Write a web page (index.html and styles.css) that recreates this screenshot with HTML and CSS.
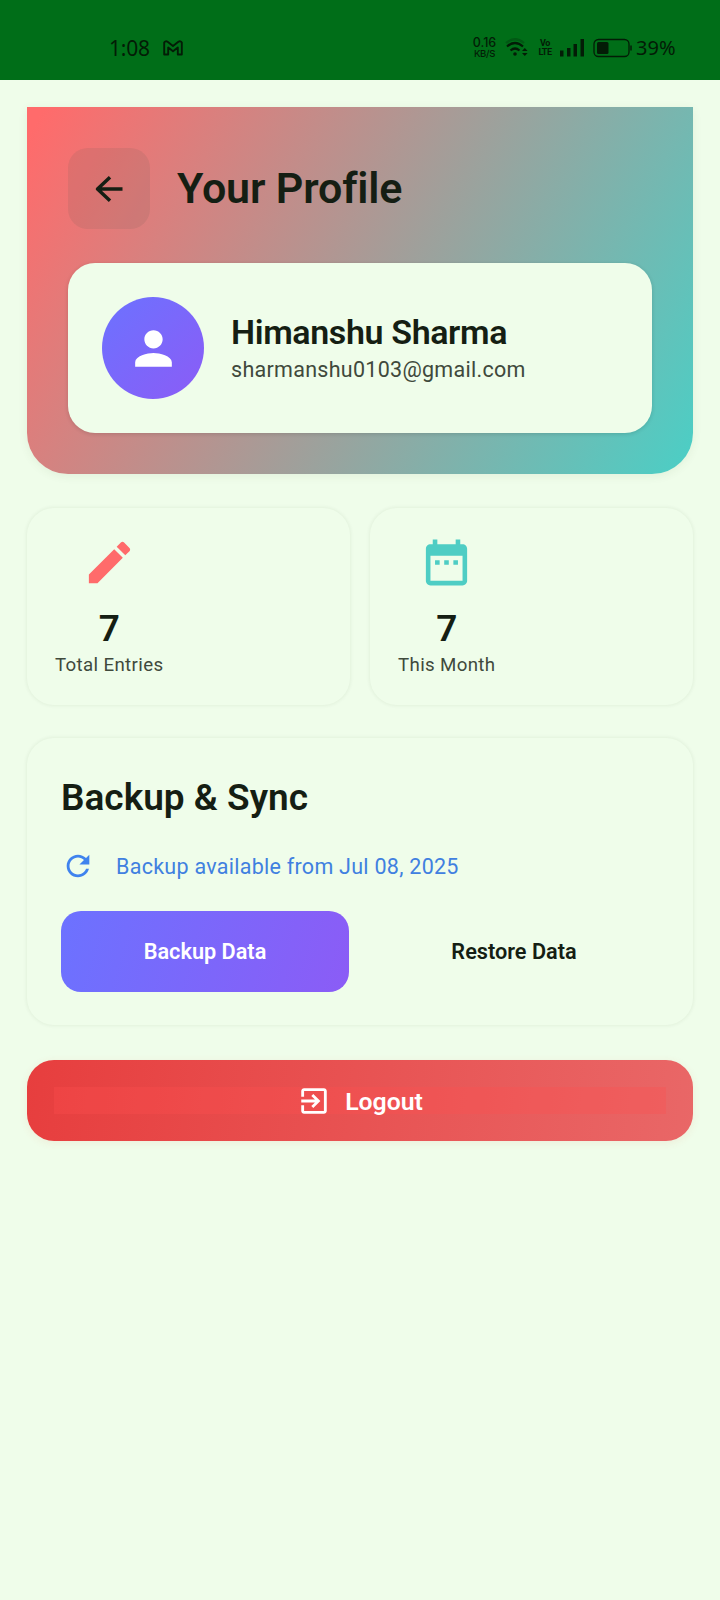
FILE: index.html
```html
<!DOCTYPE html>
<html lang="en">
<head>
<meta charset="utf-8">
<title>Your Profile</title>
<link rel="stylesheet" href="styles.css">
</head>
<body>
<div class="status">
  <div class="status-left">
    <span class="clock">1:08</span>
    <svg class="mail" width="20" height="16" viewBox="0 0 20 16" fill="none" stroke="#031c06" stroke-width="1.9" stroke-linejoin="round"><path d="M1.2 14.500V2.600Q2.500.4 4.600 1.800L10 6l5.400-4.200Q17.500.4 18.800 2.600V14.500H14.800V7.500L10 11.200 5.200 7.500v7z"/></svg>
  </div>
  <div class="status-right">
    <div class="rate"><span>0.16</span><small>KB/S</small></div>
    <svg class="wifi" width="24" height="20" viewBox="0 0 24 20" fill="none" stroke="#031c06" stroke-width="2.200"><path d="M1 5Q10-2.500 19 5" opacity=".25"/><path d="M2 8.500Q10 1.500 18 8.500M5.500 12.500q4.500-4 9 0"/><circle cx="10" cy="16" r="1.800" fill="#031c06" stroke="none"/><path d="M17 13l2.800-3 2.800 3zM17 15l2.800 3 2.800-3z" fill="#031c06" stroke="none"/></svg>
    <div class="volte"><span>Vo</span><span>LTE</span></div>
    <svg class="signal" width="25" height="18" viewBox="0 0 25 18" fill="#031c06"><rect x="0" y="11.500" width="3.500" height="6"/><rect x="7" y="9" width="3.500" height="8.500"/><rect x="13.500" y="5" width="3.500" height="12.500"/><rect x="20.500" y="0" width="3.500" height="17.500"/></svg>
    <svg class="battery" width="40" height="20" viewBox="0 0 40 20"><rect x="1" y="1.500" width="35" height="17" rx="4.500" fill="none" stroke="#031c06" stroke-width="1.300"/><rect x="4" y="4" width="11.500" height="12" rx="1.500" fill="#031c06"/><path d="M38 7.500v5" stroke="#031c06" stroke-width="1.500"/></svg>
    <span class="percent">39%</span>
  </div>
</div>
<main class="page">
  <section class="hero">
    <div class="hero-top">
      <div class="back"><svg width="32" height="28" viewBox="0 0 32 28" fill="none" stroke="#151e13" stroke-width="3.500" stroke-linejoin="round"><path d="M29.500 14H4M17 2.200L4.500 14 17 25.800"/></svg></div>
      <h1 class="title">Your Profile</h1>
    </div>
    <div class="user">
      <div class="avatar"><svg width="55" height="55" viewBox="0 0 24 24" fill="#fff"><path d="M12 12c2.210 0 4-1.790 4-4s-1.790-4-4-4-4 1.790-4 4 1.790 4 4 4zm0 2c-2.670 0-8 1.340-8 4v2h16v-2c0-2.660-5.330-4-8-4z"/></svg></div>
      <div class="user-text">
        <div class="name">Himanshu Sharma</div>
        <div class="email">sharmanshu0103@gmail.com</div>
      </div>
    </div>
  </section>
  <section class="stats">
    <div class="card stat">
      <div class="stat-body">
        <svg width="55" height="55" viewBox="0 0 24 24" fill="#ff6b6b"><path d="M3 17.250V21h3.750L17.810 9.940l-3.750-3.750L3 17.250zM20.710 7.040c.39-.39.39-1.020 0-1.410l-2.340-2.340c-.39-.39-1.020-.39-1.410 0l-1.830 1.830 3.750 3.750 1.830-1.830z"/></svg>
        <div class="count">7</div>
        <div class="label">Total Entries</div>
      </div>
    </div>
    <div class="card stat">
      <div class="stat-body">
        <svg width="55" height="55" viewBox="0 0 24 24" fill="#4ecdc4"><path d="M9 11H7v2h2v-2zm4 0h-2v2h2v-2zm4 0h-2v2h2v-2zm2-7h-1V2h-2v2H8V2H6v2H5c-1.110 0-1.990.9-1.990 2L3 20c0 1.100.89 2 2 2h14c1.100 0 2-.9 2-2V6c0-1.100-.9-2-2-2zm0 16H5V9h14v11z"/></svg>
        <div class="count">7</div>
        <div class="label">This Month</div>
      </div>
    </div>
  </section>
  <section class="card backup">
    <h2 class="heading">Backup &amp; Sync</h2>
    <div class="sync">
      <svg width="34" height="34" viewBox="0 0 24 24" fill="#3f83ee"><path d="M17.650 6.350C16.200 4.900 14.210 4 12 4c-4.420 0-7.990 3.580-7.990 8s3.570 8 7.990 8c3.730 0 6.840-2.550 7.730-6h-2.080c-.82 2.330-3.040 4-5.650 4-3.310 0-6-2.690-6-6s2.690-6 6-6c1.660 0 3.140.69 4.220 1.780L13 11h7V4l-2.350 2.350z"/></svg>
      <span class="sync-text">Backup available from Jul 08, 2025</span>
    </div>
    <div class="actions">
      <div class="button primary">Backup Data</div>
      <div class="button">Restore Data</div>
    </div>
  </section>
  <section class="logout">
    <div class="logout-inner">
      <svg width="34" height="34" viewBox="0 0 24 24" fill="#fff"><path d="M10.090 15.590L11.500 17l5-5-5-5-1.410 1.410L12.670 11H3v2h9.670l-2.580 2.590zM19 3H5c-1.110 0-2 .9-2 2v4h2V5h14v14H5v-4H3v4c0 1.100.89 2 2 2h14c1.100 0 2-.9 2-2V5c0-1.100-.9-2-2-2z"/></svg>
      <span class="logout-text">Logout</span>
    </div>
  </section>
</main>
</body>
</html>
```
FILE: styles.css
```css
* { box-sizing: border-box; }
body {
  margin: 0;
  min-height: 1600px;
  background: #effdea;
  color: #151e13;
  font-family: Roboto, sans-serif;
}
svg { display: block; flex: none; }
.status {
  height: 80px;
  padding: 18px 45px 2px 109px;
  background: #006e18;
  color: #031c06;
  display: flex;
  align-items: center;
  justify-content: space-between;
}
.status-left, .status-right { display: flex; align-items: center; }
.clock { font: 21px/24px "Noto Sans", sans-serif; width: 41px; letter-spacing: -0.2px; white-space: nowrap; }
.mail { margin-left: 13px; }
.rate { width: 25px; display: flex; flex-direction: column; align-items: center; font: 500 12.500px/12px Inter, sans-serif; }
.rate small { font: 500 9.500px/10px Inter, sans-serif; letter-spacing: -0.3px; }
.wifi { margin-left: 8px; }
.volte { margin-left: 9px; width: 14px; display: flex; flex-direction: column; align-items: center; font: 700 9px/9px Roboto, sans-serif; letter-spacing: -0.5px; }
.signal { margin-left: 8px; }
.battery { margin-left: 8px; }
.percent { margin-left: 3px; width: 39px; font: 20px/24px "Noto Sans", sans-serif; white-space: nowrap; }

.page { padding: 27px 27px 0; }
.hero {
  height: 367px;
  padding: 41px;
  border-radius: 0 0 41px 41px;
  background: linear-gradient(119deg, #ff6b6b 2%, #4ecdc4 98%);
  box-shadow: 0 2px 10px rgba(80, 90, 50, 0.08);
}
.hero-top { display: flex; align-items: center; gap: 27px; }
.back {
  width: 82px;
  height: 81px;
  border-radius: 20px;
  background: rgba(90, 90, 80, 0.12);
  display: flex;
  align-items: center;
  justify-content: center;
}
.title { margin: 0; padding-bottom: 1px; font-size: 43px; line-height: 50px; font-weight: 600; letter-spacing: -0.15px; white-space: nowrap; }
.user {
  height: 170px;
  margin-top: 34px;
  padding: 34px;
  border-radius: 27px;
  background: #effdea;
  box-shadow: 0 1px 4px rgba(0, 0, 0, 0.14);
  display: flex;
  align-items: center;
  gap: 27px;
}
.avatar {
  width: 102px;
  height: 102px;
  border-radius: 50%;
  background: linear-gradient(135deg, #6c72ff, #8b5cf6);
  display: flex;
  align-items: center;
  justify-content: center;
}
.user-text { padding-top: 2px; }
.name { font-size: 34px; line-height: 40px; font-weight: 600; letter-spacing: -0.37px; }
.email { font-size: 21.500px; line-height: 35px; color: #40493c; letter-spacing: 0.28px; }

.card {
  border-radius: 27px;
  background: #effdea;
  box-shadow: 0 0 4px rgba(30, 60, 20, 0.09);
}
.stats { margin-top: 34px; display: grid; grid-template-columns: 1fr 1fr; gap: 20px; }
.stat { height: 197px; padding: 27px 28px; display: flex; }
.stat-body { display: flex; flex-direction: column; align-items: center; }
.count { margin-top: 17px; font-size: 37px; line-height: 44px; font-weight: 600; }
.label { font-size: 18.700px; line-height: 28px; color: #40493c; letter-spacing: 0.35px; }

.backup { margin-top: 33px; height: 287px; padding: 34px; }
.heading { margin: 4px 0 0; font-size: 37px; line-height: 44px; font-weight: 600; }
.sync { margin-top: 29px; height: 34px; display: flex; align-items: center; gap: 21px; color: #4080e0; }
.sync-text { font-size: 21.500px; letter-spacing: 0.27px; white-space: nowrap; }
.actions { margin-top: 28px; display: grid; grid-template-columns: 288px 288px; gap: 21px; }
.button {
  height: 81px;
  border-radius: 20px;
  font-size: 21.700px;
  font-weight: 600;
  display: flex;
  align-items: center;
  justify-content: center;
}
.primary { background: linear-gradient(106deg, #6c72ff, #8b5cf6); color: #fff; }

.logout {
  margin-top: 35px;
  height: 81px;
  padding: 27px;
  border-radius: 27px;
  background: linear-gradient(97deg, #e73e3e, #e96767);
  box-shadow: 0 2px 8px rgba(230, 80, 60, 0.09);
}
.logout-inner {
  height: 27px;
  background: rgba(255, 80, 80, 0.3);
  color: #fff;
  font-size: 24.800px;
  font-weight: 600;
  display: flex;
  align-items: center;
  justify-content: center;
  gap: 14px;
}
.logout-text { padding-top: 2px; }
```
